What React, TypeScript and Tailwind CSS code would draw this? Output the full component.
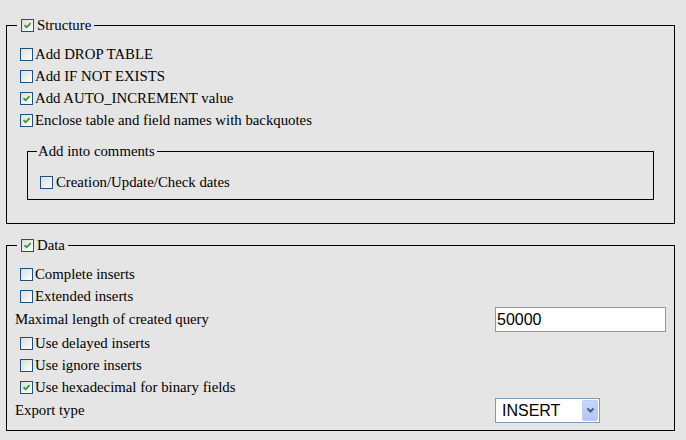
import React from 'react';

function Box({ checked = false }: { checked?: boolean }) {
  return (
    <span className="w-[13px] h-[13px] shrink-0 border border-[#1c5180] bg-linear-to-br from-[#dcdcd7] to-white flex items-center justify-center">
      {checked && (
        <svg width="9" height="9" viewBox="0 0 9 9">
          <path d="M1.5 4.2 L3.6 6.3 L7.6 2.2" stroke="#21a121" strokeWidth="1.7" fill="none" />
        </svg>
      )}
    </span>
  );
}

function Check({ label, checked = false }: { label: string; checked?: boolean }) {
  return (
    <div className="flex items-center h-[22px] ml-[5px]">
      <Box checked={checked} />
      <span className="ml-[2px]">{label}</span>
    </div>
  );
}

function Legend({ label, checked }: { label: string; checked?: boolean }) {
  return (
    <legend className="ml-[2px] pl-[4px] pr-[3px]">
      <span className="flex items-center h-[17px]">
        <Box checked={checked} />
        <span className="ml-[3px]">{label}</span>
      </span>
    </legend>
  );
}

export default function App() {
  return (
    <div className="min-h-screen bg-[#e5e5e5] pl-[6px] pr-[11px] pt-[17px] [font-family:Liberation_Serif,Times_New_Roman,serif] text-[14.8px] leading-[17px] text-black">
      <fieldset className="border border-black pl-[8px] pr-[13px] pt-[9px] pb-[23px]">
        <Legend label="Structure" checked />
        <Check label="Add DROP TABLE" />
        <Check label="Add IF NOT EXISTS" />
        <Check label="Add AUTO_INCREMENT value" checked />
        <Check label="Enclose table and field names with backquotes" checked />

        <fieldset className="border border-black ml-[12px] mr-[7px] mt-[12px] pl-[9px] pt-[11px] pb-[6px]">
          <legend className="pl-[1px] pr-[2px]">Add into comments</legend>
          <div className="flex items-center h-[22px] ml-[3px]">
            <Box />
            <span className="ml-[3px]">Creation/Update/Check dates</span>
          </div>
        </fieldset>
      </fieldset>

      <fieldset className="border border-black mt-[13px] pl-[8px] pr-[7px] pt-[9px] pb-[7px]">
        <Legend label="Data" checked />
        <Check label="Complete inserts" />
        <Check label="Extended inserts" />
        <div className="flex items-center h-[25px]">
          <span className="w-[480px]">Maximal length of created query</span>
          <input
            readOnly
            value="50000"
            className="w-[171px] h-[25px] border border-[#7f9db9] bg-white pl-[1px] [font-family:Liberation_Sans,Arial,sans-serif] text-[16px] text-black outline-none"
          />
        </div>
        <Check label="Use delayed inserts" />
        <Check label="Use ignore inserts" />
        <Check label="Use hexadecimal for binary fields" checked />
        <div className="flex items-center h-[25px]">
          <span className="w-[480px]">Export type</span>
          <div className="w-[105px] h-[25px] border border-[#7f9db9] bg-white flex items-center pl-[6px] pr-[1px] [font-family:Liberation_Sans,Arial,sans-serif] text-[16px]">
            <span className="flex-1">INSERT</span>
            <span className="w-[16px] h-[21px] rounded-[2px] border border-[#bccdf9] bg-linear-to-b from-[#c6d6fc] to-[#b2c7f6] flex items-center justify-center">
              <svg width="9" height="7" viewBox="0 0 9 7">
                <path d="M1.5 1.5 L4.5 4.5 L7.5 1.5" stroke="#4d6185" strokeWidth="2" fill="none" />
              </svg>
            </span>
          </div>
        </div>
      </fieldset>
    </div>
  );
}
